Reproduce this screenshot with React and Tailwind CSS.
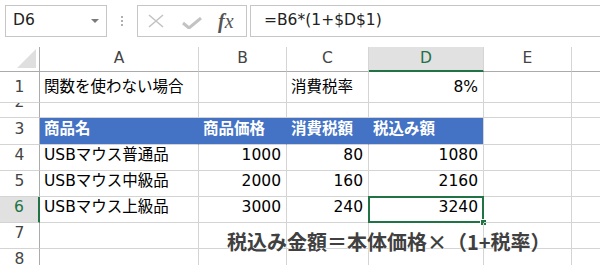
import React from 'react';

const font = { fontFamily: '"DejaVu Sans", "Noto Sans CJK JP", sans-serif' };

const colW = ['w-[159px]', 'w-[88px]', 'w-[82px]', 'w-[115px]', 'w-[88px]'];

const rows = [
  { n: '1', h: 'h-[31px]', cells: [{ t: '関数を使わない場合' }, {}, { t: '消費税率' }, { t: '8%', r: true }, {}] },
  { n: '2', h: 'h-[15px]', cells: [{}, {}, {}, {}, {}] },
  {
    n: '3', h: 'h-[27px]', head: true,
    cells: [{ t: '商品名' }, { t: '商品価格' }, { t: '消費税額' }, { t: '税込み額' }, {}],
  },
  { n: '4', h: 'h-[26px]', cells: [{ t: 'USBマウス普通品' }, { t: '1000', r: true }, { t: '80', r: true }, { t: '1080', r: true }, {}] },
  { n: '5', h: 'h-[26px]', cells: [{ t: 'USBマウス中級品' }, { t: '2000', r: true }, { t: '160', r: true }, { t: '2160', r: true }, {}] },
  { n: '6', h: 'h-[26px]', sel: true, cells: [{ t: 'USBマウス上級品' }, { t: '3000', r: true }, { t: '240', r: true }, { t: '3240', r: true, sel: true }, {}] },
  { n: '7', h: 'h-[26px]', cells: [{}, {}, {}, {}, {}] },
  { n: '8', h: 'h-[26px]', cells: [{}, {}, {}, {}, {}] },
];

function Toolbar() {
  return (
    <div className="h-[47px] flex items-start pt-[5px] pl-[5px]">
      <div className="w-[102px] h-[32px] border border-[#c6c6c6] flex items-center pl-[7px] pr-[7px] justify-between text-[15.5px] text-[#222]">
        <span>D6</span>
        <span className="w-0 h-0 border-l-[4px] border-r-[4px] border-t-[4px] border-l-transparent border-r-transparent border-t-[#7a7a7a]" />
      </div>
      <div className="w-[30px] h-[32px] flex flex-col items-center justify-center gap-[2px]">
        <span className="w-[2px] h-[2px] bg-[#b0b0b0]" />
        <span className="w-[2px] h-[2px] bg-[#b0b0b0]" />
        <span className="w-[2px] h-[2px] bg-[#b0b0b0]" />
      </div>
      <div className="w-[110px] h-[32px] border border-[#c6c6c6] flex items-center">
        <svg width="18" height="14" viewBox="0 0 18 14" className="ml-[9px]">
          <path d="M2 1 L16 13 M16 1 L2 13" stroke="#c3c3c3" strokeWidth="1.6" fill="none" />
        </svg>
        <svg width="20" height="12" viewBox="0 0 20 12" className="ml-[17px] mt-[3px]">
          <path d="M1 6 L7 11 L19 1" stroke="#c3c3c3" strokeWidth="3" fill="none" />
        </svg>
        <span className="ml-[16px] text-[20px] text-[#555] italic leading-none" style={{ fontFamily: '"Liberation Serif", serif' }}>
          <span className="font-bold">f</span>x
        </span>
      </div>
      <div className="ml-[3px] flex-1 h-[32px] border-t border-b border-l border-[#c6c6c6] flex items-center pl-[13px] text-[15.5px] text-[#222]">
        =B6*(1+$D$1)
      </div>
    </div>
  );
}

function HeaderRow() {
  const letters = ['A', 'B', 'C', 'D', 'E'];
  return (
    <div className="flex h-[25px]">
      <div className="w-[40px] shrink-0 border-r border-b border-[#ababab] relative bg-white">
        <svg width="20" height="20" className="absolute right-[2px] bottom-[2px]">
          <path d="M19 0 L19 19 L0 19 Z" fill="#dfdfdf" />
        </svg>
      </div>
      {letters.map((l, i) => (
        <div
          key={l}
          className={`${colW[i]} shrink-0 flex items-center justify-center border-r border-r-[#d5d5d5] ${
            l === 'D'
              ? 'bg-[#e1e1e1] text-[#217346] border-b-2 border-b-[#217346]'
              : 'border-b border-b-[#ababab] text-[#444]'
          }`}
        >
          {l}
        </div>
      ))}
      <div className="flex-1 border-b border-[#ababab]" />
    </div>
  );
}

function Row({ row }) {
  return (
    <div className={`flex ${row.h}`}>
      <div
        className={`w-[40px] shrink-0 flex items-end justify-center pb-[5px] leading-[20px] overflow-hidden border-b border-b-[#d4d4d4] ${
          row.sel
            ? 'bg-[#e1e1e1] text-[#217346] border-r-2 border-r-[#217346]'
            : 'border-r border-r-[#ababab] text-[#444]'
        }`}
      >
        {row.n}
      </div>
      {row.cells.map((c, i) => {
        const blue = row.head && i < 4;
        return (
          <div
            key={i}
            className={`${colW[i]} shrink-0 relative flex items-end pb-[5px] leading-[20px] whitespace-nowrap ${
              c.r ? 'justify-end pr-[5px]' : 'pl-[4px]'
            } ${
              blue
                ? 'bg-[#4472c4] text-white font-bold border-b border-b-[#d4d4d4] ' + (i === 3 ? 'border-r border-r-[#d4d4d4]' : 'border-r border-r-[#4472c4]')
                : 'border-r border-b border-[#d4d4d4] text-black'
            }`}
          >
            {c.t}
            {c.sel && (
              <>
                <div className="absolute -left-[1px] -top-[1px] -right-[1px] -bottom-[1px] border-2 border-[#217346]" />
                <div className="absolute -right-[4px] -bottom-[4px] w-[7px] h-[7px] bg-[#217346] border border-white" />
              </>
            )}
          </div>
        );
      })}
      <div className="flex-1 border-b border-[#d4d4d4]" />
    </div>
  );
}

export default function App() {
  return (
    <div className="w-[600px] h-[265px] overflow-hidden bg-white relative text-[15.5px]" style={font}>
      <Toolbar />
      <HeaderRow />
      {rows.map((r) => (
        <Row key={r.n} row={r} />
      ))}
      <div
        className="absolute left-[227px] top-[232px] text-[20px] font-bold leading-none text-[#404040] whitespace-nowrap [text-shadow:0_0_2px_#fff,0_0_2px_#fff]"
        style={{ fontFamily: '"Noto Sans CJK JP", sans-serif' }}
      >
        税込み金額＝本体価格×（1+税率）
      </div>
    </div>
  );
}
